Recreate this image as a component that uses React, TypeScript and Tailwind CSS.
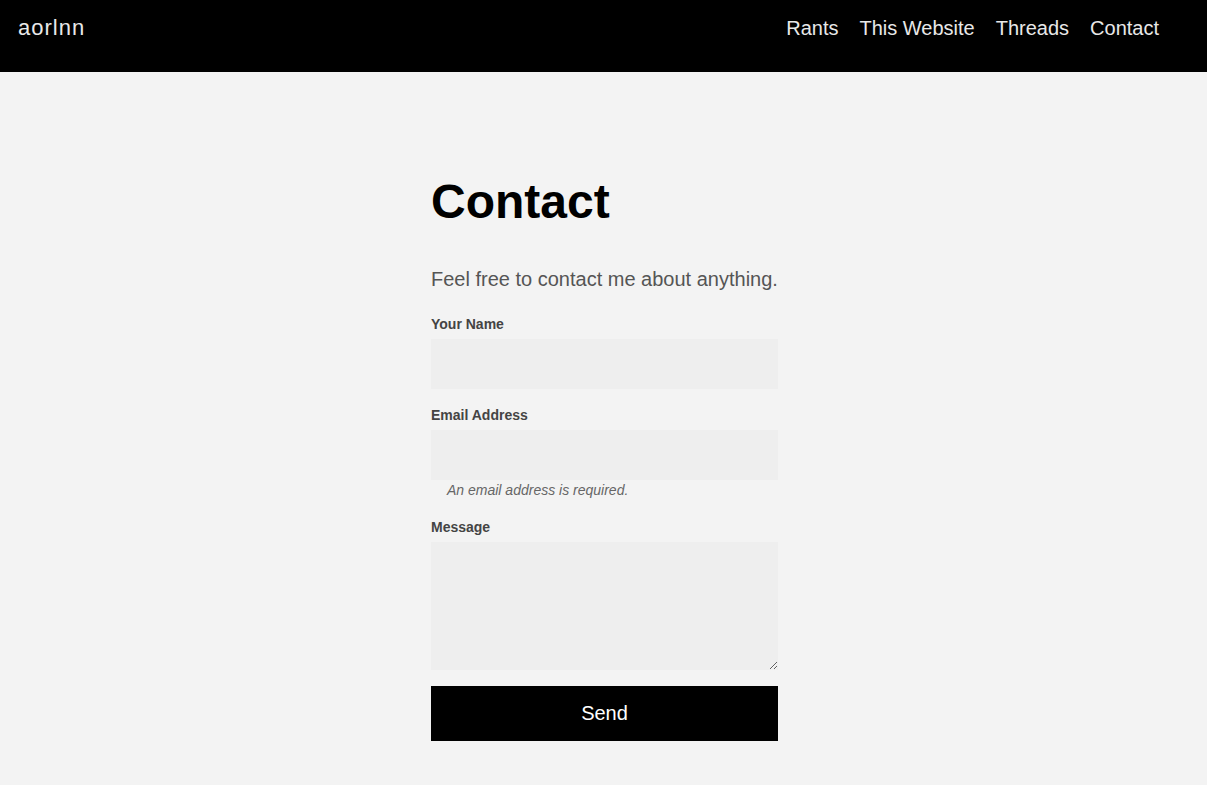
const NAV = ["Rants", "This Website", "Threads", "Contact"];

function Field({ label, children }: { label: string; children: React.ReactNode }) {
  return (
    <div className="mt-4 first:mt-0">
      <label className="mb-[5px] block text-sm font-bold leading-5 text-[#444]">{label}</label>
      {children}
    </div>
  );
}

export default function App() {
  return (
    <div className="min-h-screen bg-[#f3f3f3] font-['Liberation_Sans',Arial,sans-serif]">
      <header className="flex h-[72px] items-start justify-between bg-black pl-[18px] pr-12">
        <a href="#" className="mt-[14px] text-[22px] leading-[28px] tracking-[1px] text-[#e8e8e8]">
          aorlnn
        </a>
        <nav className="mt-[14px] flex gap-[21px]">
          {NAV.map((item) => (
            <a key={item} href="#" className="text-[20px] leading-[28px] text-[#e8e8e8]">
              {item}
            </a>
          ))}
        </nav>
      </header>

      <div className="flex justify-center pl-[2px]">
        <main className="w-[347px] pt-[106px] pb-11">
          <h1 className="text-[48px] font-bold leading-none text-black">Contact</h1>
          <p className="mt-[39px] text-[20px] leading-7 text-[#555]">
            Feel free to contact me about anything.
          </p>

          <form className="mt-[21px]" onSubmit={(e) => e.preventDefault()}>
            <Field label="Your Name">
              <input type="text" className="block h-[50px] w-full bg-[#eeeeee] px-3 outline-none" />
            </Field>
            <Field label="Email Address">
              <input type="email" className="block h-[50px] w-full bg-[#eeeeee] px-3 outline-none" />
              <p className="pb-px pl-4 text-sm italic leading-5 text-[#666]">
                An email address is required.
              </p>
            </Field>
            <Field label="Message">
              <textarea className="block h-[128px] w-full resize-y bg-[#eeeeee] p-3 outline-none" />
            </Field>
            <button
              type="submit"
              className="mt-4 block h-[55px] w-full bg-black pb-0.5 text-[20px] text-white"
            >
              Send
            </button>
          </form>
        </main>
      </div>
    </div>
  );
}
